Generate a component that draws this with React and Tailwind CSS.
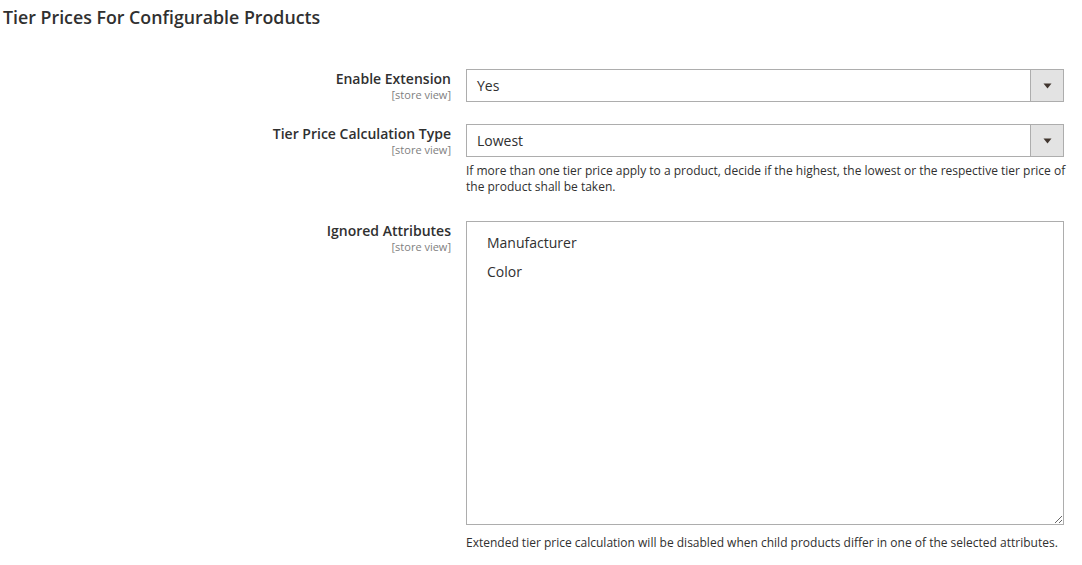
import React from 'react';

const font = { fontFamily: '"Open Sans", "Liberation Sans", sans-serif' };

const Label = ({ children }) => (
  <div className="text-right">
    <div className="text-[14px] leading-[20px] font-semibold text-[#303030]">{children}</div>
    <div className="text-[11px] leading-[11px] text-[#808080]">[store view]</div>
  </div>
);

const Select = ({ value }) => (
  <div className="flex h-[33px] border border-[#adadad] bg-white">
    <div className="flex-1 flex items-center pl-[10px] text-[14px] text-[#303030]">{value}</div>
    <div className="w-[33px] flex items-center justify-center bg-[#e3e3e3] border-l border-[#adadad]">
      <svg width="9" height="6" viewBox="0 0 9 6">
        <path d="M0.5 0.5 L8.5 0.5 L4.5 5.5 Z" fill="#41362f" />
      </svg>
    </div>
  </div>
);

const App = () => {
  return (
    <div className="w-[1082px] h-[565px] bg-white overflow-hidden" style={font}>
      <h2 className="pl-[3px] pt-[5px] text-[17.8px] leading-[24px] font-semibold text-[#303030]">
        Tier Prices For Configurable Products
      </h2>

      <div className="grid grid-cols-[451px_598px] gap-x-[15px] mt-[40px]">
        <Label>Enable Extension</Label>
        <Select value="Yes" />

        <div className="col-span-2 h-[22px]" />

        <Label>Tier Price Calculation Type</Label>
        <div>
          <Select value="Lowest" />
          <p className="mt-[6px] w-[604px] text-[12px] leading-[16px] text-[#303030]">
            If more than one tier price apply to a product, decide if the highest, the lowest or the respective tier price of the product shall be taken.
          </p>
        </div>

        <div className="col-span-2 h-[26px]" />

        <Label>Ignored Attributes</Label>
        <div>
          <div className="h-[304px] border border-[#adadad] bg-white resize-y overflow-auto pl-[20px] pt-[11px] text-[14px] text-[#303030]">
            <div className="leading-[20px]">Manufacturer</div>
            <div className="leading-[20px] mt-[9px]">Color</div>
          </div>
          <p className="mt-[10px] text-[12px] leading-[16px] text-[#303030]">
            Extended tier price calculation will be disabled when child products differ in one of the selected attributes.
          </p>
        </div>
      </div>
    </div>
  );
};

export default App;
